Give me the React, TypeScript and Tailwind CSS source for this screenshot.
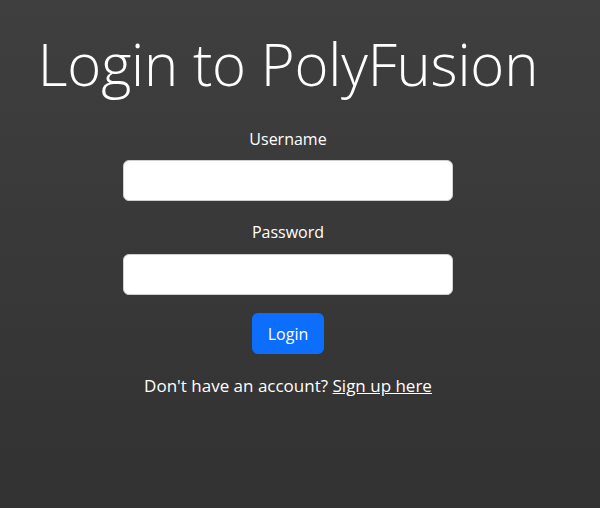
import React from 'react';

/**
 * Login screen
 * Centered form on a dark gradient background
 */
export default function App() {
  return (
    <div className="w-[600px] h-[508px] bg-gradient-to-b from-[#3f3f3f] to-[#323232] text-white font-['Open_Sans',sans-serif] pr-[24px] overflow-hidden">
      <div className="flex flex-col items-center">
        {/* Title */}
        <h1 className="mt-[27px] text-[58px] leading-[74px] font-light tracking-[-0.2px]">
          Login to PolyFusion
        </h1>

        {/* Form */}
        <form className="mt-[26px] w-[330px] flex flex-col items-center" onSubmit={(e) => e.preventDefault()}>
          <label htmlFor="username" className="text-[16px] leading-[24px]">
            Username
          </label>
          <input
            id="username"
            type="text"
            className="mt-[9px] w-full h-[41px] rounded-[6px] bg-white border border-[#cfcfcf] text-black px-3"
          />

          <label htmlFor="password" className="mt-[19px] text-[16px] leading-[24px]">
            Password
          </label>
          <input
            id="password"
            type="password"
            className="mt-[10px] w-full h-[41px] rounded-[6px] bg-white border border-[#cfcfcf] text-black px-3"
          />

          <button
            type="submit"
            className="mt-[18px] h-[41px] px-[16px] rounded-[6px] bg-[#0d6efd] text-[16px] text-white"
          >
            Login
          </button>
        </form>

        {/* Sign up link */}
        <p className="mt-[20px] text-[17px] leading-[24px]">
          Don't have an account? <a href="#" className="underline">Sign up here</a>
        </p>
      </div>
    </div>
  );
}
